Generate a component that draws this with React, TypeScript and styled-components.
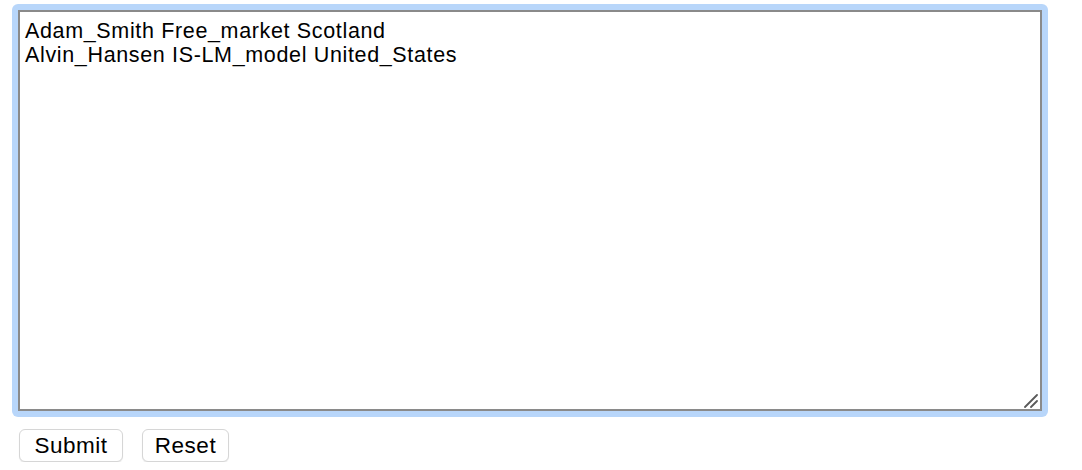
import React from 'react'
import styled, { createGlobalStyle } from 'styled-components'

const GlobalStyle = createGlobalStyle`
  body {
    margin: 0;
    background: #ffffff;
    font-family: 'Liberation Sans', Arial, Helvetica, sans-serif;
  }
`

const Form = styled.form`
  display: flex;
  flex-direction: column;
  align-items: flex-start;
  padding: 4px 0 0 12px;
`

const FocusRing = styled.div`
  position: relative;
  display: flex;
  padding: 6px;
  background: #b8d6fa;
  border-radius: 6px;
`

const Area = styled.textarea`
  box-sizing: border-box;
  width: 1024px;
  height: 401px;
  margin: 0;
  padding: 7px 5px 5px;
  border: 2px solid #8a8a8a;
  border-radius: 0;
  outline: none;
  font-family: 'Liberation Sans', Arial, Helvetica, sans-serif;
  font-size: 21.5px;
  letter-spacing: 0.65px;
  line-height: 24px;
  color: #000;
  background: #fff;
  resize: none;
`

const Grip = styled.svg`
  position: absolute;
  right: 9px;
  bottom: 9px;
  width: 16px;
  height: 16px;
  pointer-events: none;
`

const Buttons = styled.div`
  display: flex;
  gap: 19px;
  margin: 12px 0 0 7px;
`

const Button = styled.button<{ $w: number }>`
  box-sizing: border-box;
  width: ${(p) => p.$w}px;
  height: 33px;
  padding: 0;
  border: 1px solid #d6d6d6;
  border-radius: 6px;
  background: #fff;
  box-shadow: 0 1px 1px rgba(0, 0, 0, 0.08);
  font-family: 'Liberation Sans', Arial, Helvetica, sans-serif;
  font-size: 22.5px;
  letter-spacing: 0.5px;
  color: #000;
`

const text = `Adam_Smith Free_market Scotland
Alvin_Hansen IS-LM_model United_States`

export default function App() {
  return (
    <>
      <GlobalStyle />
      <Form onSubmit={(e) => e.preventDefault()}>
        <FocusRing>
          <Area defaultValue={text} spellCheck={false} />
          <Grip viewBox="0 0 16 16">
            <path d="M2 15 L14 3 M8 15 L14 9" stroke="#5a5a5a" strokeWidth="1.8" strokeLinecap="round" />
          </Grip>
        </FocusRing>
        <Buttons>
          <Button $w={104} type="submit">Submit</Button>
          <Button $w={87} type="reset">Reset</Button>
        </Buttons>
      </Form>
    </>
  )
}
